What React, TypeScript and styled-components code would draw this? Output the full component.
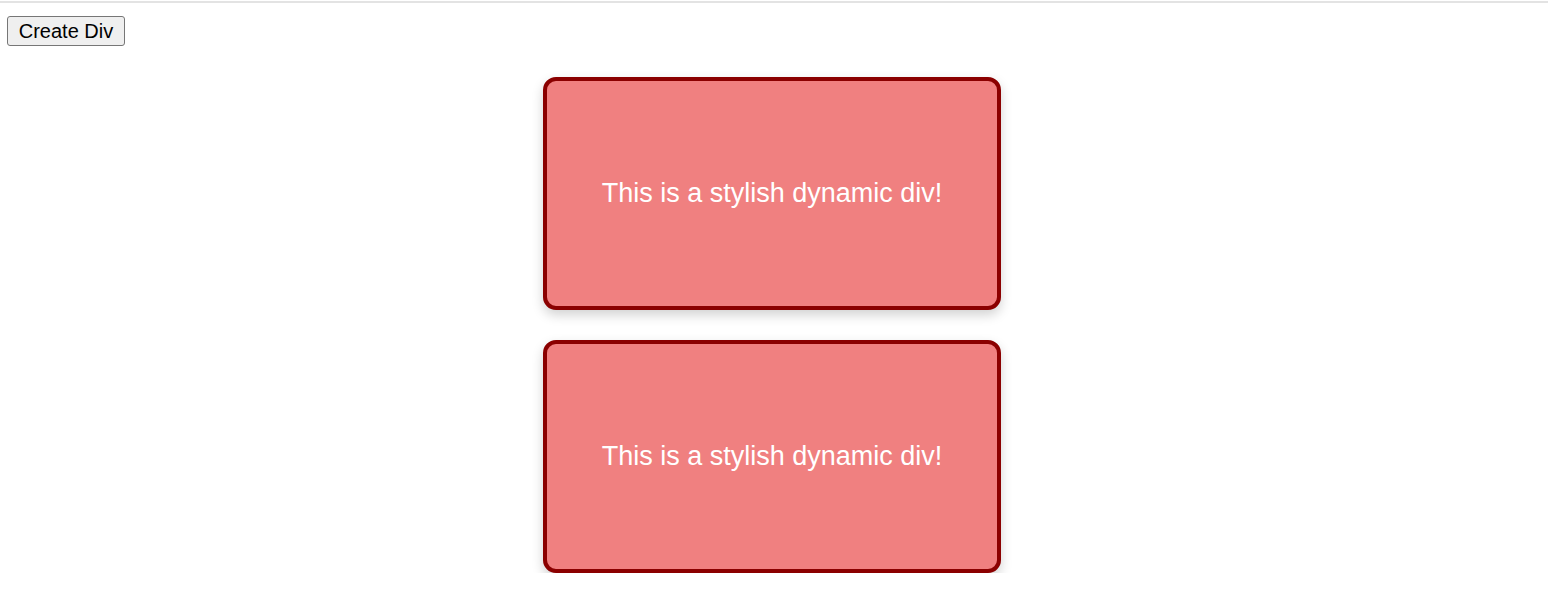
import React from "react";
import styled, { createGlobalStyle } from "styled-components";

const Global = createGlobalStyle`
  html, body { margin: 0; padding: 0; background: #ffffff; }
  body { font-family: "Liberation Sans", Arial, sans-serif; }
`;

const Page = styled.div`
  border-top: 2px solid #e3e3e3;
  margin-top: 1px;
  padding: 13px 7px 0;
  display: flex;
  flex-direction: column;
  align-items: flex-start;
`;

const Button = styled.button`
  font-family: "Liberation Sans", Arial, sans-serif;
  font-size: 20px;
  line-height: 24px;
  color: #000;
  background: #efefef;
  border: 1px solid #767676;
  border-radius: 3px;
  padding: 1px 6px;
  height: 30px;
  width: 118px;
  white-space: nowrap;
  cursor: pointer;
`;

const List = styled.div`
  align-self: stretch;
  display: flex;
  flex-direction: column;
  align-items: center;
  gap: 30px;
  margin-top: 31px;
  padding-right: 4px;
`;

const Card = styled.div`
  box-sizing: border-box;
  width: 458px;
  height: 233px;
  background: #f08080;
  border: 4px solid #8b0000;
  border-radius: 13px;
  box-shadow: 0 5px 12px rgba(0, 0, 0, 0.18);
  display: flex;
  align-items: center;
  justify-content: center;
  color: #ffffff;
  font-size: 27px;
`;

export default function App() {
  return (
    <>
      <Global />
      <Page>
        <Button>Create Div</Button>
        <List>
          <Card>This is a stylish dynamic div!</Card>
          <Card>This is a stylish dynamic div!</Card>
        </List>
      </Page>
    </>
  );
}
